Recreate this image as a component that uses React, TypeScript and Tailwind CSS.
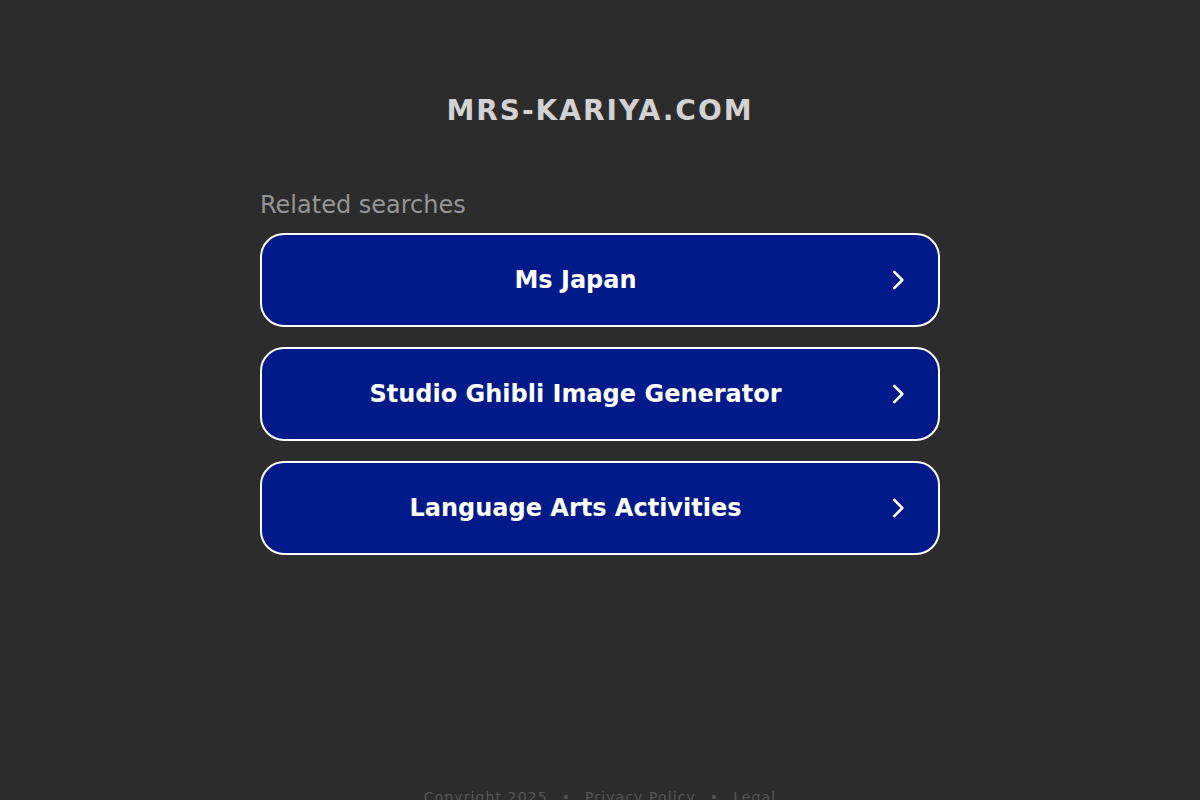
import React from 'react';

const SEARCHES = ['Ms Japan', 'Studio Ghibli Image Generator', 'Language Arts Activities'];

const Chevron: React.FC = () => (
  <svg width="26" height="26" viewBox="0 0 24 24" fill="none" stroke="#ffffff" strokeWidth="2.4" strokeLinecap="round" strokeLinejoin="round">
    <path d="M8.5 4.5l7.5 7.5-7.5 7.5" />
  </svg>
);

export default function App() {
  return (
    <div className="w-full h-[800px] overflow-hidden bg-[#2c2c2c] flex flex-col items-center" style={{ fontFamily: '"DejaVu Sans", Verdana, sans-serif' }}>
      {/* Domain title */}
      <h1 className="mt-[93px] text-[28px] leading-[36px] font-bold tracking-[2px] text-[#d2d2d2]">MRS-KARIYA.COM</h1>

      {/* Related searches */}
      <div className="w-[680px] mt-[60px]">
        <p className="text-[24px] leading-[32px] text-[#959595]">Related searches</p>
        <div className="mt-[12px] flex flex-col gap-[20px]">
          {SEARCHES.map(label => (
            <a
              key={label}
              href="#"
              className="h-[94px] flex items-center bg-[#011a89] border-2 border-white rounded-[24px] pl-[4px] pr-[27px]"
            >
              <span className="flex-1 text-center text-white text-[24px] font-bold">{label}</span>
              <Chevron />
            </a>
          ))}
        </div>
      </div>

      {/* Footer */}
      <div className="mt-auto mb-[-8px] flex items-center gap-[14px] text-[14px] tracking-[1.1px] text-[#555555]">
        <span>Copyright 2025</span>
        <span>•</span>
        <span>Privacy Policy</span>
        <span>•</span>
        <span>Legal</span>
      </div>
    </div>
  );
}
